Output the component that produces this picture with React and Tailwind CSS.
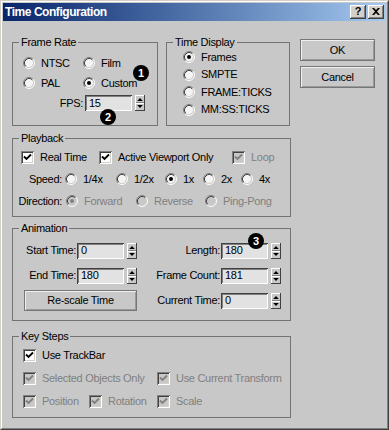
import React from "react";

const FONT = "font-['Liberation_Sans',Arial,sans-serif]";

function Radio({ checked, disabled }) {
  return (
    <svg width="12" height="12" viewBox="0 0 12 12" className="shrink-0">
      <circle cx="6" cy="6" r="4.2" fill={disabled ? "#c8c8c8" : "#f4f4f4"} />
      <path d="M2.11 9.89 A5.5 5.5 0 0 1 9.89 2.11" stroke="#808080" fill="none" />
      <path d="M9.89 2.11 A5.5 5.5 0 0 1 2.11 9.89" stroke="#ffffff" fill="none" />
      <path d="M2.82 9.18 A4.5 4.5 0 0 1 9.18 2.82" stroke="#404040" fill="none" />
      <path d="M9.18 2.82 A4.5 4.5 0 0 1 2.82 9.18" stroke="#d4d0c8" fill="none" />
      {checked && <circle cx="6" cy="6" r="2" fill={disabled ? "#808080" : "#000"} />}
    </svg>
  );
}

function RadioItem({ label, checked, disabled, className = "" }) {
  return (
    <div className={`flex items-center gap-[6px] ${className}`}>
      <Radio checked={checked} disabled={disabled} />
      <span className={disabled ? "text-[#808080]" : ""}>{label}</span>
    </div>
  );
}

function Check({ checked, disabled }) {
  return (
    <span
      className={`relative inline-block w-[13px] h-[13px] shrink-0 shadow-[inset_1px_1px_#808080,inset_-1px_-1px_#ffffff,inset_2px_2px_#404040,inset_-2px_-2px_#d4d0c8] ${
        disabled ? "bg-[#c8c8c8]" : "bg-white"
      }`}
    >
      {checked && (
        <svg width="13" height="13" viewBox="0 0 13 13" className="absolute left-0 top-0">
          <path d="M3 5.5 L5.5 8 L10 3.5" stroke={disabled ? "#808080" : "#000"} strokeWidth="1.9" fill="none" />
        </svg>
      )}
    </span>
  );
}

function CheckItem({ label, checked, disabled, className = "" }) {
  return (
    <div className={`flex items-center gap-[6px] ${className}`}>
      <Check checked={checked} disabled={disabled} />
      <span className={disabled ? "text-[#808080]" : ""}>{label}</span>
    </div>
  );
}

function Spinner() {
  return (
    <svg width="10" height="16" viewBox="0 0 10 16" className="shrink-0">
      <rect x="0" y="0" width="10" height="16" fill="#c8c8c8" />
      <rect x="0" y="0" width="10" height="1" fill="#ffffff" />
      <rect x="0" y="0" width="1" height="16" fill="#ffffff" />
      <rect x="9" y="0" width="1" height="16" fill="#404040" />
      <rect x="0" y="15" width="10" height="1" fill="#404040" />
      <rect x="1" y="7" width="8" height="1" fill="#808080" />
      <rect x="1" y="8" width="8" height="1" fill="#ffffff" />
      <path d="M5 3 L7.8 6 L2.2 6 Z" fill="#000" />
      <path d="M2.2 10 L7.8 10 L5 13 Z" fill="#000" />
    </svg>
  );
}

function Field({ value, w = "w-[47px]" }) {
  return (
    <div
      className={`${w} h-[16px] shrink-0 bg-[#e2e2e2] shadow-[inset_1px_1px_#404040,inset_-1px_-1px_#ffffff,inset_2px_2px_#808080] pl-[4px] flex items-center leading-none`}
    >
      {value}
    </div>
  );
}

function Button({ children, className = "" }) {
  return (
    <div
      className={`flex items-center justify-center bg-[#c8c8c8] border border-[#767676] shadow-[inset_1px_1px_#f0f0f0,inset_-1px_-1px_#9a9a9a] ${className}`}
    >
      {children}
    </div>
  );
}

function Group({ label, className = "", children }) {
  return (
    <fieldset className={`border border-[#737373] shrink-0 ${className}`}>
      <legend className="ml-[6px] px-[2px] leading-[13px]">{label}</legend>
      {children}
    </fieldset>
  );
}

function Badge({ n, className }) {
  return (
    <div
      className={`absolute w-[16px] h-[16px] rounded-full bg-black text-white font-bold text-[11px] leading-none flex items-center justify-center tracking-normal ${className}`}
    >
      {n}
    </div>
  );
}

function CaptionButton({ children }) {
  return (
    <div className="w-[16px] h-[14px] bg-[#d4d0c8] flex items-center justify-center shadow-[inset_-1px_-1px_#404040,inset_1px_1px_#ffffff,inset_-2px_-2px_#808080]">
      {children}
    </div>
  );
}

export default function App() {
  return (
    <div
      className={`relative w-[389px] h-[430px] bg-[#c8c8c8] border border-t-[#d4d0c8] border-l-[#d4d0c8] border-r-[#404040] border-b-[#404040] ${FONT} text-[11px] tracking-[-0.3px] text-black`}
    >
      <div className="h-full border border-t-white border-l-white border-r-[#808080] border-b-[#808080] p-[1px] flex flex-col">
        {/* Title bar */}
        <div className="h-[18px] shrink-0 bg-linear-to-r from-[#0a246a] to-[#a6caf0] flex items-center justify-between pl-[2px] pr-[2px]">
          <span className="text-white font-bold text-[12px] tracking-[-0.45px] leading-none">Time Configuration</span>
          <div className="flex gap-[2px]">
            <CaptionButton>
              <span className="font-bold text-[11px] leading-none tracking-normal mt-[-1px]">?</span>
            </CaptionButton>
            <CaptionButton>
              <svg width="8" height="7" viewBox="0 0 8 7" className="mt-[-1px]">
                <path d="M0 0 L2 0 L4 2 L6 0 L8 0 L5 3.5 L8 7 L6 7 L4 5 L2 7 L0 7 L3 3.5 Z" fill="#000" />
              </svg>
            </CaptionButton>
          </div>
        </div>

        {/* Body */}
        <div className="flex-1 pl-[9px] pt-[15px] flex flex-col">
          {/* Top row */}
          <div className="flex">
            <Group label="Frame Rate" className="w-[146px] h-[90px]">
              <div className="flex flex-col pt-[4px]">
                <div className="h-[20px] flex items-center pl-[10px]">
                  <RadioItem label="NTSC" className="w-[60px]" />
                  <RadioItem label="Film" />
                </div>
                <div className="h-[20px] flex items-center pl-[10px]">
                  <RadioItem label="PAL" className="w-[60px]" />
                  <RadioItem label="Custom" checked />
                </div>
                <div className="h-[20px] flex items-center">
                  <span className="w-[70px] text-right">FPS:</span>
                  <div className="ml-[2px]">
                    <Field value="15" w="w-[47px]" />
                  </div>
                  <div className="ml-[3px]">
                    <Spinner />
                  </div>
                </div>
              </div>
            </Group>

            <Group label="Time Display" className="ml-[8px] w-[124px] h-[90px]">
              <div className="flex flex-col mt-[-1px] pl-[16px]">
                <div className="h-[18px] flex items-center">
                  <RadioItem label="Frames" checked />
                </div>
                <div className="h-[17px] flex items-center">
                  <RadioItem label="SMPTE" />
                </div>
                <div className="h-[18px] flex items-center">
                  <RadioItem label="FRAME:TICKS" />
                </div>
                <div className="h-[17px] flex items-center">
                  <RadioItem label="MM:SS:TICKS" />
                </div>
              </div>
            </Group>

            <div className="ml-[10px] mt-[3px] flex flex-col gap-[5px]">
              <Button className="w-[75px] h-[22px]">OK</Button>
              <Button className="w-[75px] h-[22px]">Cancel</Button>
            </div>
          </div>

          {/* Playback */}
          <Group label="Playback" className="mt-[6px] w-[279px] h-[85px]">
            <div className="flex flex-col pt-[1px]">
              <div className="h-[22px] flex items-center pl-[8px]">
                <CheckItem label="Real Time" checked className="w-[78px] gap-[5px]" />
                <CheckItem label="Active Viewport Only" checked className="w-[133px] gap-[5px]" />
                <CheckItem label="Loop" checked disabled className="gap-[5px]" />
              </div>
              <div className="h-[22px] flex items-center">
                <span className="w-[49px] text-right">Speed:</span>
                <div className="ml-[3px] flex items-center">
                  <RadioItem label="1/4x" className="w-[51px] gap-[5px]" />
                  <RadioItem label="1/2x" className="w-[49px] gap-[5px]" />
                  <RadioItem label="1x" checked className="w-[38px] gap-[5px]" />
                  <RadioItem label="2x" className="w-[38px] gap-[5px]" />
                  <RadioItem label="4x" className="gap-[5px]" />
                </div>
              </div>
              <div className="h-[22px] flex items-center">
                <span className="w-[49px] text-right">Direction:</span>
                <div className="ml-[4px] flex items-center">
                  <RadioItem label="Forward" checked disabled className="w-[70px]" />
                  <RadioItem label="Reverse" disabled className="w-[69px]" />
                  <RadioItem label="Ping-Pong" disabled />
                </div>
              </div>
            </div>
          </Group>

          {/* Animation */}
          <Group label="Animation" className="mt-[5px] w-[279px] h-[99px]">
            <div className="flex flex-col pt-[3px]">
              <div className="h-[25px] flex items-center">
                <div className="w-[124px] flex items-center">
                  <span className="w-[63px] text-right">Start Time:</span>
                  <div className="ml-[1px]"><Field value="0" /></div>
                  <div className="ml-[3px]"><Spinner /></div>
                </div>
                <div className="flex items-center">
                  <span className="w-[83px] text-right">Length:</span>
                  <div className="ml-[1px]"><Field value="180" /></div>
                  <div className="ml-[3px]"><Spinner /></div>
                </div>
              </div>
              <div className="h-[25px] flex items-center">
                <div className="w-[124px] flex items-center">
                  <span className="w-[63px] text-right">End Time:</span>
                  <div className="ml-[1px]"><Field value="180" /></div>
                  <div className="ml-[3px]"><Spinner /></div>
                </div>
                <div className="flex items-center">
                  <span className="w-[83px] text-right">Frame Count:</span>
                  <div className="ml-[1px]"><Field value="181" /></div>
                  <div className="ml-[3px]"><Spinner /></div>
                </div>
              </div>
              <div className="h-[25px] flex items-center">
                <div className="w-[124px] flex items-center">
                  <Button className="ml-[11px] w-[113px] h-[21px]">Re-scale Time</Button>
                </div>
                <div className="flex items-center">
                  <span className="w-[83px] text-right">Current Time:</span>
                  <div className="ml-[1px]"><Field value="0" /></div>
                  <div className="ml-[3px]"><Spinner /></div>
                </div>
              </div>
            </div>
          </Group>

          {/* Key Steps */}
          <Group label="Key Steps" className="mt-[9px] w-[279px] h-[88px]">
            <div className="flex flex-col pt-[1px] pl-[10px]">
              <div className="h-[23px] flex items-center">
                <CheckItem label="Use TrackBar" checked />
              </div>
              <div className="h-[23px] flex items-center">
                <CheckItem label="Selected Objects Only" checked disabled className="w-[134px]" />
                <CheckItem label="Use Current Transform" checked disabled />
              </div>
              <div className="h-[23px] flex items-center">
                <CheckItem label="Position" checked disabled className="w-[66px]" />
                <CheckItem label="Rotation" checked disabled className="w-[68px]" />
                <CheckItem label="Scale" checked disabled />
              </div>
            </div>
          </Group>
        </div>
      </div>

      <Badge n="1" className="left-[132px] top-[64px]" />
      <Badge n="2" className="left-[99px] top-[108px]" />
      <Badge n="3" className="left-[247px] top-[232px]" />
    </div>
  );
}
